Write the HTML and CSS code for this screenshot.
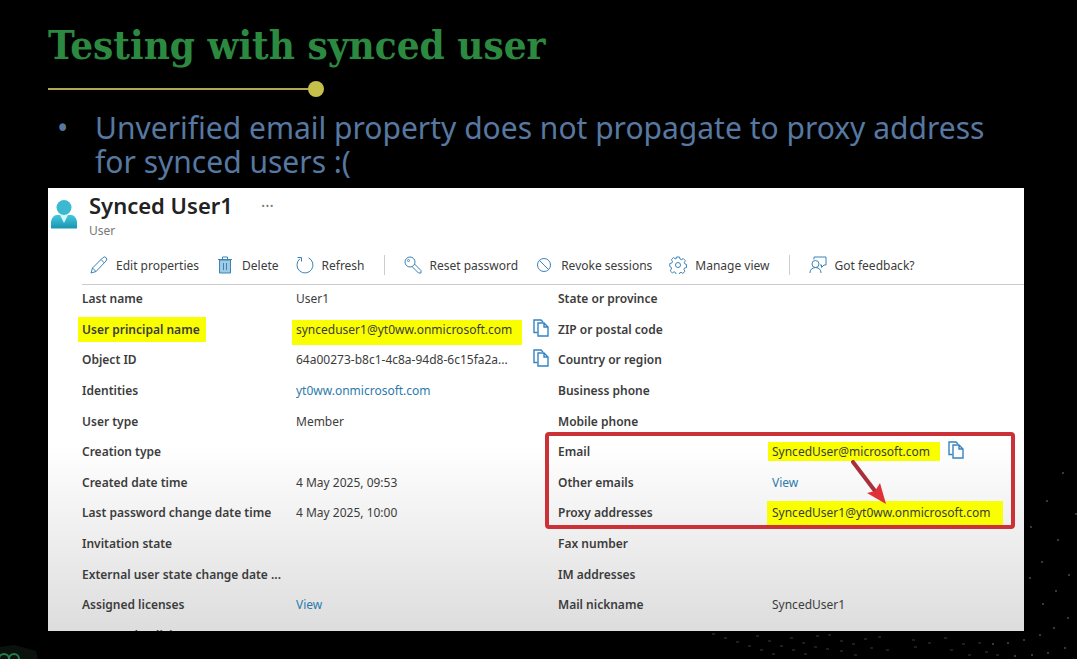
FILE: index.html
```html
<!DOCTYPE html>
<html lang="en">
<head>
<meta charset="utf-8">
<title>Testing with synced user</title>
<link rel="stylesheet" href="styles.css">
</head>
<body>
<svg class="symbols" aria-hidden="true">
  <symbol id="copy" viewBox="0 0 16 18"><path d="M4.500 13.500H1V1h7l2 2" /><path d="M5 4h6l4 4v9H5zM11 4v4h4" /></symbol>
</svg>
<main class="slide">
  <svg class="logo" viewBox="0 0 40 14" aria-hidden="true"><path d="M0 2L14 0l22 6 2 8H0z" fill="#0b120e"/><circle cx="4" cy="14" r="5"/><circle cx="14" cy="14" r="5"/></svg>
  <svg class="stars" viewBox="0 0 377 199" aria-hidden="true">
    <path stroke="#1c1f1e" d="M12 174h3M24 178h3M36 182h3M48 186h3M60 190h3M72 194h3M56 176h3M68 181h3M80 186h3M92 190h3M104 194h3M90 178h3M102 183h3M114 187h3M128 175h3M140 181h3M116 176h3M152 184h3M164 179h3M178 177h3M126 189h3M140 191h3M154 195h3M170 188h3M186 190h3M212 180h3M214 187h3M228 183h3M244 178h3M262 184h3M250 190h3M268 195h3M285 192h3M296 195h3M278 183h3"/>
    <path stroke="#353938" d="M362 13h2M346 41h2M375 54h2M357 80h2M341 102h2M368 115h2M355 131h2M342 144h2M367 158h2M353 168h2M339 175h2M323 180h2M307 183h2M292 184h2M364 188h2M347 193h2M331 195h2M314 196h2M329 118h2M330 67h2"/>
  </svg>
  <h1 class="title">Testing with synced user</h1>
  <div class="rule"></div>
  <ul class="points">
    <li>Unverified email property does not propagate to proxy address for synced users :(</li>
  </ul>
  <section class="panel">
    <header class="head">
      <svg class="avatar" viewBox="0 0 26 29" aria-hidden="true">
        <defs><linearGradient id="av" x1="0" y1="0" x2="0" y2="1"><stop offset="0" stop-color="#45c8dc"/><stop offset="1" stop-color="#1795b4"/></linearGradient></defs>
        <path fill="url(#av)" d="M0 28.500V23c0-4 2-7 5-8h16c3 1 5 4 5 8v5.500z"/>
        <path fill="#d5f6fa" d="M9 15h8l-4 8z"/>
        <circle cx="13" cy="7.500" r="7.500" fill="#3ab9d0"/>
      </svg>
      <div class="names"><h2>Synced User1</h2><p>User</p></div>
      <button class="more" aria-label="More">···</button>
    </header>
    <nav class="toolbar">
      <button><svg viewBox="0 0 18 18"><path d="M1 17l1.500-5L12.500 2q2-2 3.500-.5t0 3.500L6 15.500zM11 3.500L14.500 7M2.500 12L6 15.500"/></svg>Edit properties</button>
      <button><svg viewBox="0 0 18 18"><path fill="#9dcbe8" d="M3.500 4h11v13h-11z"/><path d="M2 3.500h14M6.500 3V1h5v2M7.500 7v7M10.500 7v7"/></svg>Delete</button>
      <button><svg viewBox="0 0 18 18"><path d="M12.500 1.800A8 8 0 1 1 4 2.700M1.500 1.500H5.500V5.500"/></svg>Refresh</button>
      <span class="bar"></span>
      <button><svg viewBox="0 0 18 18"><circle cx="6" cy="6" r="5"/><circle cx="4.500" cy="4.500" r="1"/><path d="M10.500 8L17 14.500V17h-2.500L8 10.500"/></svg>Reset password</button>
      <button><svg viewBox="0 0 18 18"><circle cx="9" cy="9" r="6.500"/><path d="M4.500 4.500l9 9"/></svg>Revoke sessions</button>
      <button><svg viewBox="0 0 18 18"><path d="M7.500 1h3l.5 2 1.500.7 1.800-1.100 2.100 2.100-1.100 1.800.7 1.500 1.500.5v3l-2 .5-.6 1.500 1.100 1.800-2.100 2.100-1.800-1.100-1.500.7-.5 1.500h-3l-.5-2-1.500-.7-1.800 1.100-2.100-2.100 1.100-1.800L2.500 11.500.8 10.500v-3l2-.5.7-1.500-1.100-1.800 2.100-2.100 1.800 1.100L7 3z"/><circle cx="9" cy="9" r="2.500"/></svg>Manage view</button>
      <span class="bar"></span>
      <button><svg viewBox="0 0 18 18"><circle cx="6.500" cy="8" r="3.500"/><path d="M1 17q0-5 5.500-5.500Q12 12 12 17M5 3.500V1h12v8h-2l-2.500 2.500V9H11"/></svg>Got feedback?</button>
    </nav>
    <div class="props">
      <dl>
        <dt>Last name</dt><dd>User1</dd>
        <dt><mark class="key">User principal name</mark></dt><dd><mark class="low">synceduser1@yt0ww.onmicrosoft.com</mark><button class="copy" aria-label="Copy user principal name"><svg><use href="#copy"/></svg></button></dd>
        <dt>Object ID</dt><dd>64a00273-b8c1-4c8a-94d8-6c15fa2a...<button class="copy" aria-label="Copy object ID"><svg><use href="#copy"/></svg></button></dd>
        <dt>Identities</dt><dd><a href="#">yt0ww.onmicrosoft.com</a></dd>
        <dt>User type</dt><dd>Member</dd>
        <dt>Creation type</dt><dd></dd>
        <dt>Created date time</dt><dd>4 May 2025, 09:53</dd>
        <dt>Last password change date time</dt><dd>4 May 2025, 10:00</dd>
        <dt>Invitation state</dt><dd></dd>
        <dt>External user state change date ...</dt><dd></dd>
        <dt>Assigned licenses</dt><dd><a href="#">View</a></dd>
        <dt>Password policies</dt><dd></dd>
      </dl>
      <dl class="contact">
        <dt>State or province</dt><dd></dd>
        <dt>ZIP or postal code</dt><dd></dd>
        <dt>Country or region</dt><dd></dd>
        <dt>Business phone</dt><dd></dd>
        <dt>Mobile phone</dt><dd></dd>
        <dt>Email</dt><dd><mark>SyncedUser@microsoft.com</mark><button class="copy" aria-label="Copy email"><svg><use href="#copy"/></svg></button></dd>
        <dt>Other emails</dt><dd><a href="#">View</a></dd>
        <dt>Proxy addresses</dt><dd><mark class="tall">SyncedUser1@yt0ww.onmicrosoft.com</mark></dd>
        <dt>Fax number</dt><dd></dd>
        <dt>IM addresses</dt><dd></dd>
        <dt>Mail nickname</dt><dd>SyncedUser1</dd>
      </dl>
      <div class="callout"><svg class="arrow" viewBox="0 0 38 46"><path d="M2 2l22 29" stroke="#a92f3c" stroke-width="4" stroke-linecap="round"/><path d="M35 44L16 33l8-2 5-8z" fill="#e03038"/></svg></div>
    </div>
  </section>
</main>
</body>
</html>
```
FILE: styles.css
```css
* { box-sizing: border-box; }
body { margin: 0; background: #000; font-family: "Noto Sans", "Open Sans", sans-serif; }
svg { fill: none; stroke: #3d83b4; stroke-width: 1; }
button { border: 0; padding: 0; background: none; color: inherit; font: inherit; }
.symbols { display: none; }
.slide { position: relative; height: 100vh; padding: 19px 53px 28px 48px; display: flex; flex-direction: column; }
.stars { position: absolute; right: 0; bottom: 0; width: 377px; height: 199px; stroke-width: 2px; }
.logo { position: absolute; left: 0; bottom: 0; width: 40px; height: 14px; stroke: #23804a; stroke-width: 2px; }
.logo path { stroke: none; }
.title { margin: 0; font: bold 40px/52px "DejaVu Serif Condensed", "DejaVu Serif", serif; color: #2b8a40; }
.rule { position: relative; width: 268px; height: 2px; margin-top: 17px; background: #b0a850; }
.rule::after { content: ""; position: absolute; right: -8px; top: -7px; width: 16px; height: 16px; border-radius: 50%; background: #c5c04c; }
.points { margin: 21px 0 9px; padding: 0 32px 0 47px; list-style: none; color: #5778a0; font-size: 30px; line-height: 34px; }
.points li { position: relative; }
.points li::before { content: "•"; position: absolute; left: -38px; }
.panel { position: relative; flex: 1; min-height: 0; display: flex; flex-direction: column; overflow: hidden; color: #3c3c3c; background: linear-gradient(#fff 58%, #ddd); font-size: 12px; }
.head { display: flex; align-items: flex-start; padding: 2px 3px; height: 58px; }
.avatar { width: 26px; height: 29px; margin-top: 10px; stroke: none; }
.names { margin-left: 12px; }
h2 { margin: 0; font-size: 22px; line-height: 30px; font-weight: 600; color: #222; }
.names p { margin: 0; line-height: 22px; color: #777; }
.more { margin-left: 28px; font-size: 16px; line-height: 32px; color: #777; }
.toolbar { display: flex; align-items: center; height: 39px; margin-left: 34px; padding-left: 8px; border-bottom: 1px solid #ccc; gap: 17px; }
.toolbar button { display: flex; align-items: center; gap: 8px; white-space: nowrap; }
.toolbar svg { width: 18px; height: 18px; }
.bar { width: 1px; height: 20px; margin: 0 2px; background: #ccc; }
.props { position: relative; flex: 1; min-height: 0; display: grid; grid-template-columns: 476fr 466fr; padding-left: 34px; }
dl { margin: 0; display: grid; grid-template-columns: 214px 1fr; grid-template-rows: repeat(11, 1fr) 9px; line-height: 27px; white-space: nowrap; min-height: 0; }
dt { font-weight: 600; min-height: 0; }
dd { margin: 0; padding-right: 9px; display: flex; align-items: flex-start; justify-content: space-between; gap: 12px; min-height: 0; }
.contact dd { justify-content: flex-start; }
a { color: #2b7bab; text-decoration: none; }
mark { display: block; color: inherit; background: #faff00; line-height: 19px; margin: 4px -4px 0; padding: 0 10px 0 4px; }
.key { display: inline-block; padding: 3px 6px 3px 4px; margin-top: 1px; }
.low { padding: 0 10px 6px 4px; }
.tall { padding: 2px 12px 4px 5px; margin: 2px -5px 0; }
.copy { height: 18px; margin-top: 3px; }
.copy svg { display: block; width: 16px; height: 18px; stroke: #3584c2; stroke-width: 1.4px; }
.callout { position: absolute; left: 497px; right: 9px; top: 147px; height: 97px; border: 4px solid #cb3238; border-radius: 4px; pointer-events: none; }
.arrow { position: absolute; left: 302px; top: 24px; width: 38px; height: 46px; stroke: none; }
```
